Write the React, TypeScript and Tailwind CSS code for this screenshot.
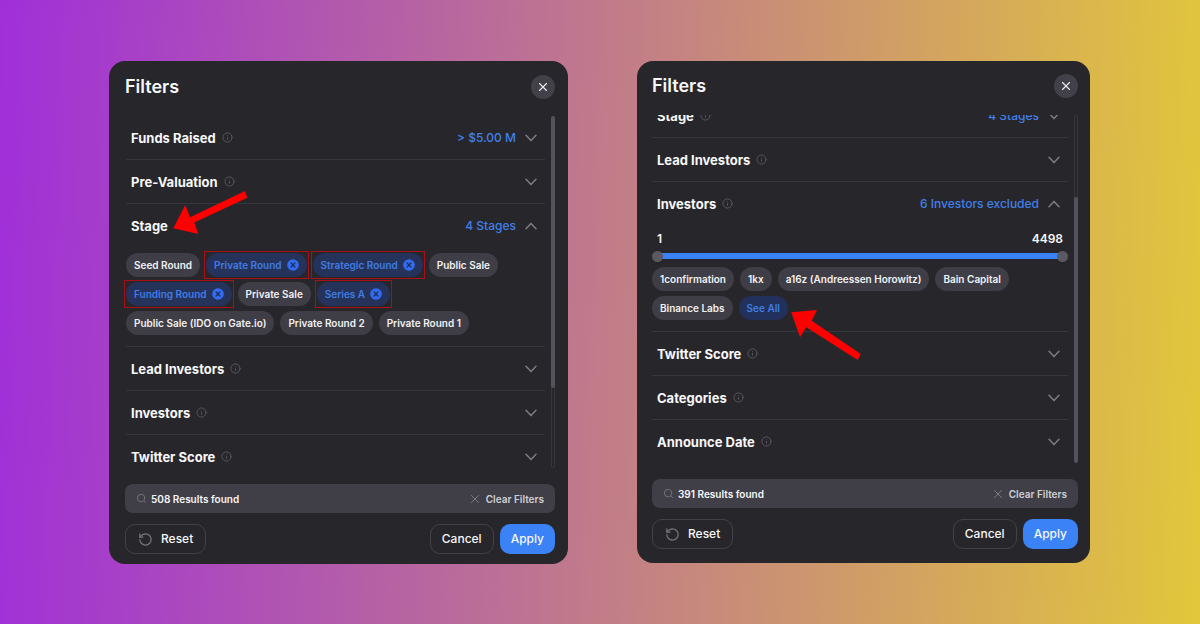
import React, { useState } from 'react';
import { Info, RotateCcw, Search, X } from 'lucide-react';

function Chevron({ open }: { open?: boolean }) {
  return (
    <svg viewBox="0 0 12 8" className="h-2 w-3 shrink-0" fill="none" stroke="#7b7b80" strokeWidth="1.5" strokeLinecap="round" strokeLinejoin="round" aria-hidden="true">
      <path d={open ? 'M1 6.8 6 1.4l5 5.4' : 'M1 1.2l5 5.4 5-5.4'} />
    </svg>
  );
}

type SectionProps = {
  title: string;
  value?: string;
  open?: boolean;
  info?: boolean;
  last?: boolean;
  children?: React.ReactNode;
};

function Section({ title, value, open, info = true, last, children }: SectionProps) {
  return (
    <section className={last ? 'shrink-0' : 'shrink-0 border-b border-[#37363c]'}>
      <button type="button" aria-expanded={!!open} className="flex h-[43px] w-full items-center pr-2 pl-[5px] text-left">
        <span className="text-[13px] leading-5 font-bold text-[#f7f7f8]">{title}</span>
        {info && <Info className="ml-1.5 size-[11px] text-[#5b5a61]" strokeWidth={2} aria-hidden="true" />}
        <span className="mr-[9px] ml-auto text-xs leading-5 font-medium text-[#4080ea]">{value}</span>
        <Chevron open={open} />
      </button>
      {children}
    </section>
  );
}

function Chip({ label, selected }: { label: string; selected?: boolean }) {
  if (selected) {
    return (
      <button type="button" aria-pressed="true" className="relative flex h-6 items-center gap-[5px] rounded-full bg-[#25335b] px-2 text-[10px] leading-4 font-semibold text-[#3f7ce6]">
        {label}
        <svg viewBox="0 0 12 12" className="size-3" aria-hidden="true">
          <circle cx="6" cy="6" r="5.8" fill="#316cf4" />
          <path d="M4.1 4.1l3.8 3.8M7.9 4.1 4.1 7.9" stroke="#20305f" strokeWidth="1.4" strokeLinecap="round" />
        </svg>
        <span className="pointer-events-none absolute -inset-0.5 border border-[#a90f16]" />
      </button>
    );
  }
  return (
    <button type="button" className="flex h-6 items-center rounded-full bg-[#3f3e46] px-2 text-[10px] leading-4 font-semibold text-[#f1f1f3]">
      {label}
    </button>
  );
}

function InvestorRange() {
  const [low, setLow] = useState(1);
  const [high, setHigh] = useState(4498);
  const min = 1;
  const max = 4498;
  const input =
    'pointer-events-none col-start-1 row-start-1 h-3 w-full appearance-none bg-transparent [&::-webkit-slider-thumb]:pointer-events-auto [&::-webkit-slider-thumb]:size-[11px] [&::-webkit-slider-thumb]:appearance-none [&::-webkit-slider-thumb]:rounded-full [&::-webkit-slider-thumb]:bg-[#5b5a63]';
  const pct = (v: number) => ((v - min) / (max - min)) * 100;
  return (
    <div>
      <div className="flex justify-between px-[5px] text-xs leading-4 font-semibold text-[#f7f7f8]">
        <output>{low}</output>
        <output>{high}</output>
      </div>
      <div className="mt-[3px] grid items-center">
        <div className="col-start-1 row-start-1 mx-1 h-1.5 bg-[#3f3e46]">
          <div className="h-full bg-[#3b82f6]" style={{ marginLeft: `${pct(low)}%`, width: `${pct(high) - pct(low)}%` }} />
        </div>
        <input type="range" aria-label="Minimum investors" min={min} max={max} value={low} onChange={(e) => setLow(Math.min(+e.target.value, high))} className={input} />
        <input type="range" aria-label="Maximum investors" min={min} max={max} value={high} onChange={(e) => setHigh(Math.max(+e.target.value, low))} className={input} />
      </div>
    </div>
  );
}

function Header() {
  return (
    <header className="flex h-7 items-center justify-between">
      <h2 className="text-lg leading-7 font-semibold text-[#f7f7f8]">Filters</h2>
      <button type="button" aria-label="Close" className="flex size-6 items-center justify-center rounded-full bg-[#42414a] text-[#e8e8ea]">
        <X className="size-3.5" strokeWidth={2} />
      </button>
    </header>
  );
}

function Footer({ count }: { count: number }) {
  return (
    <footer className="mt-4 flex flex-col gap-[11px]">
      <div className="flex h-[29px] items-center rounded-lg bg-[#403f48] px-[11px] text-[10px] leading-4">
        <Search className="mr-1 size-[11px] text-[#77767e]" strokeWidth={2} aria-hidden="true" />
        <span className="font-semibold text-[#f7f7f8]">{count} Results found</span>
        <button type="button" className="ml-auto flex items-center gap-1 font-semibold text-[#cfcfd3]">
          <X className="size-3.5 text-[#85848b]" strokeWidth={1.5} aria-hidden="true" />
          Clear Filters
        </button>
      </div>
      <div className="flex h-[30px] items-stretch gap-1.5 text-xs font-medium text-[#f7f7f8]">
        <button type="button" className="flex items-center gap-2 rounded-[10px] border border-[#434249] px-3">
          <RotateCcw className="size-[15px] text-[#77767c]" strokeWidth={2} aria-hidden="true" />
          Reset
        </button>
        <button type="button" className="ml-auto rounded-[10px] border border-[#434249] px-[11px]">Cancel</button>
        <button type="button" className="rounded-[10px] bg-[#3b82f6] px-[11px]">Apply</button>
      </div>
    </footer>
  );
}

export default function App() {
  return (
    <main
      className="grid min-h-screen grid-cols-[459fr_453fr] items-start gap-[69px] bg-[linear-gradient(92deg,#a02fd9,#c17b8a_50%,#e2c73b)] py-[61px] pr-[110px] pl-[109px]"
      style={{ fontFamily: 'Inter, "Liberation Sans", sans-serif' }}
    >
      <div className="relative rounded-2xl bg-[#27262b] pt-3 pr-[13px] pb-2.5 pl-4">
        <Header />
        <div className="mt-[15px] flex h-[352px] gap-1.5">
          <div className="-ml-px flex flex-1 flex-col overflow-hidden pl-0.5">
            <Section title="Funds Raised" value="> $5.00 M" />
            <Section title="Pre-Valuation" />
            <Section title="Stage" value="4 Stages" open info={false}>
              <div className="flex flex-col gap-[5px] pt-1.5 pb-[11px]">
                <div className="flex gap-1.5">
                  <Chip label="Seed Round" />
                  <Chip label="Private Round" selected />
                  <Chip label="Strategic Round" selected />
                  <Chip label="Public Sale" />
                </div>
                <div className="flex gap-1.5">
                  <Chip label="Funding Round" selected />
                  <Chip label="Private Sale" />
                  <Chip label="Series A" selected />
                </div>
                <div className="flex gap-1.5">
                  <Chip label="Public Sale (IDO on Gate.io)" />
                  <Chip label="Private Round 2" />
                  <Chip label="Private Round 1" />
                </div>
              </div>
            </Section>
            <Section title="Lead Investors" />
            <Section title="Investors" />
            <Section title="Twitter Score" last />
          </div>
          <div className="w-1 rounded-full border border-[#37363c]">
            <div className="-m-px h-[272px] rounded-full bg-[#53525d]" />
          </div>
        </div>
        <Footer count={508} />
        <svg viewBox="0 0 75 44" className="pointer-events-none absolute top-[130px] left-16 h-11 w-[75px]" fill="#fe0000" aria-hidden="true">
          <path d="M0.3 37.3 12.3 14 17 26.3 72 0 74.3 6.7 21.3 31.5 25.3 43Z" />
        </svg>
      </div>

      <div className="relative rounded-2xl bg-[#27262b] pt-[11px] pr-3 pb-3.5 pl-[15px]">
        <Header />
        <div className="mt-[15px] flex h-[348px] gap-1.5">
          <div className="flex flex-1 flex-col justify-end overflow-hidden">
            <Section title="Stage" value="4 Stages" />
            <Section title="Lead Investors" />
            <Section title="Investors" value="6 Investors excluded" open>
              <div className="pt-1.5 pb-[11px]">
                <InvestorRange />
                <div className="mt-[5px] flex flex-col gap-[5px]">
                  <div className="flex gap-1.5">
                    <Chip label="1confirmation" />
                    <Chip label="1kx" />
                    <Chip label="a16z (Andreessen Horowitz)" />
                    <Chip label="Bain Capital" />
                  </div>
                  <div className="flex gap-1.5">
                    <Chip label="Binance Labs" />
                    <button type="button" className="flex h-6 items-center rounded-full bg-[#22315b] px-2 text-[10px] leading-4 font-semibold text-[#3f7ce6]">
                      See All
                    </button>
                  </div>
                </div>
              </div>
            </Section>
            <Section title="Twitter Score" />
            <Section title="Categories" />
            <Section title="Announce Date" last />
          </div>
          <div className="flex w-1 flex-col justify-end rounded-full border border-[#37363c]">
            <div className="-m-px h-[266px] rounded-full bg-[#53525d]" />
          </div>
        </div>
        <Footer count={391} />
        <svg viewBox="0 0 70 52" className="pointer-events-none absolute top-[248px] left-[154px] h-[52px] w-[70px]" fill="#fe0000" aria-hidden="true">
          <path d="M0.3 3.3 26 1 20.7 11.7 69.7 45 66.7 51 15.3 18.3 9 28.3Z" />
        </svg>
      </div>
    </main>
  );
}
